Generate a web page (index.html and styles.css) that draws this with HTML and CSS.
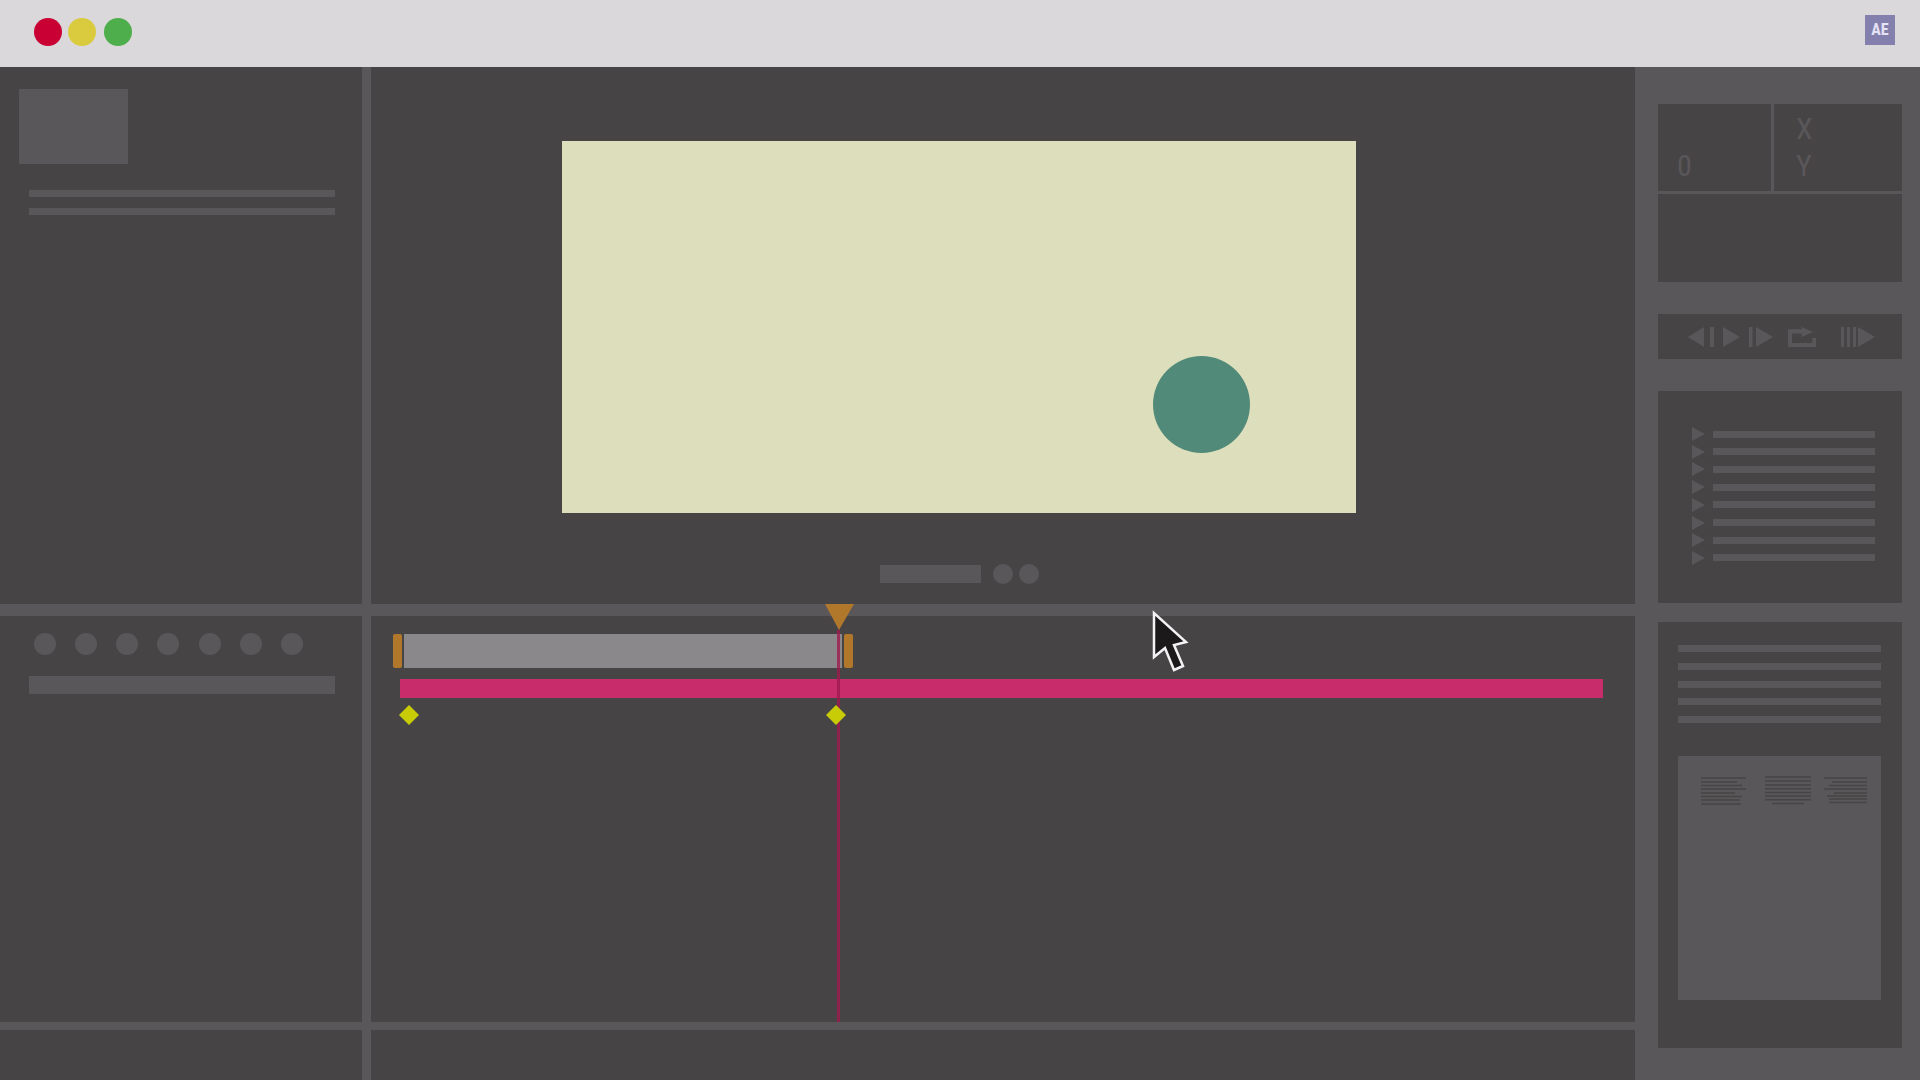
FILE: index.html
```
<!DOCTYPE html>
<html lang="en">
<head>
    <meta charset="UTF-8">
    <meta name="viewport" content="width=device-width, initial-scale=1.0">
    <title>AE</title>
    <link rel="stylesheet" href="styles.css">
</head>
<body>
    <header class="titlebar">
        <div class="window-buttons">
            <button class="dot close" aria-label="Close"></button>
            <button class="dot minimize" aria-label="Minimize"></button>
            <button class="dot maximize" aria-label="Maximize"></button>
        </div>
        <div class="app-badge">AE</div>
    </header>

    <div class="workspace">
        <main class="panels">
            <section class="panel project">
                <div class="thumb"></div>
                <div class="lines project-lines"><i></i><i></i></div>
            </section>

            <section class="panel preview">
                <div class="stage"><div class="ball"></div></div>
                <div class="preview-controls">
                    <div class="preview-bar"></div>
                    <button class="round" aria-label="Snapshot"></button>
                    <button class="round" aria-label="Channels"></button>
                </div>
            </section>

            <section class="panel layers">
                <div class="switches">
                    <button aria-label="Switch 1"></button>
                    <button aria-label="Switch 2"></button>
                    <button aria-label="Switch 3"></button>
                    <button aria-label="Switch 4"></button>
                    <button aria-label="Switch 5"></button>
                    <button aria-label="Switch 6"></button>
                    <button aria-label="Switch 7"></button>
                </div>
                <div class="layer-bar"></div>
            </section>

            <section class="panel timeline">
                <div class="work-area">
                    <span class="handle"></span>
                    <span class="range"></span>
                    <span class="handle"></span>
                </div>
                <div class="clip"></div>
                <svg class="key key-start" viewBox="0 0 20 20"><path d="M10 0L20 10L10 20L0 10Z"/></svg>
                <svg class="key key-end" viewBox="0 0 20 20"><path d="M10 0L20 10L10 20L0 10Z"/></svg>
                <div class="playhead">
                    <svg viewBox="0 0 30 26"><path d="M1 0H30L15 26Z"/></svg>
                    <span></span>
                </div>
                <svg class="cursor" viewBox="0 0 38 64">
                    <path d="M2 3V47L13 38L22 60L31 56L22 35L34 32Z"/>
                </svg>
            </section>

            <section class="panel"></section>
            <section class="panel"></section>
        </main>

        <aside class="sidebar">
            <section class="info">
                <div class="cell cell-zero"><span>0</span></div>
                <div class="cell cell-xy"><span>X</span><span>Y</span></div>
                <div class="cell cell-wide"></div>
            </section>

            <section class="transport">
                <button aria-label="Previous frame">
                    <svg width="26" height="20" viewBox="0 0 26 20"><path d="M0 10L16 0V20ZM22 0H26V20H22Z"/></svg>
                </button>
                <button aria-label="Play">
                    <svg width="17" height="20" viewBox="0 0 17 20"><path d="M0 0L17 10L0 20Z"/></svg>
                </button>
                <button aria-label="Next frame">
                    <svg width="24" height="20" viewBox="0 0 24 20"><path d="M0 0H3.5V20H0ZM7 0L24 10L7 20Z"/></svg>
                </button>
                <button class="loop" aria-label="Loop">
                    <svg width="28" height="20" viewBox="0 0 28 20"><path d="M0 2.3H13.7V0L25 5L13.7 10V6.5H4V16H24.3V11H28V20H0Z"/></svg>
                </button>
                <button class="ram" aria-label="RAM preview">
                    <svg width="34" height="20" viewBox="0 0 34 20"><path d="M0 0H3V20H0ZM6 0H9V20H6ZM12 0H15V20H12ZM17 0L34 10L17 20Z"/></svg>
                </button>
            </section>

            <section class="effects">
                <ul>
                    <li></li><li></li><li></li><li></li>
                    <li></li><li></li><li></li><li></li>
                </ul>
            </section>

            <section class="paragraph">
                <div class="lines paragraph-lines"><i></i><i></i><i></i><i></i><i></i></div>
                <div class="align-box">
                    <svg viewBox="0 0 166 30">
                        <!-- left -->
                        <path d="M0 2H45M0 6H36M0 9.5H41M0 13H45M0 17H34M0 20.5H41M0 24H39M0 28H40"/>
                        <!-- justify -->
                        <path d="M64 1H110M64 5H110M64 9H110M64 12.7H110M64 16.5H110M64 20H110M64 23.7H110M71 27.5H103"/>
                        <!-- right -->
                        <path d="M123 2H166M131 6H166M128 9.5H166M123 13H166M133 17H166M126 20H166M128 23H166M128 26.5H166"/>
                    </svg>
                </div>
            </section>
        </aside>
    </div>
</body>
</html>
```
FILE: styles.css
```
* {
    box-sizing: border-box;
}
body {
    margin: 0;
    min-height: 100vh;
    display: flex;
    flex-direction: column;
    background-color: #5a575a;
    font-family: "Roboto Condensed", "Open Sans Condensed", "DejaVu Sans Condensed", Roboto, sans-serif;
}
button {
    padding: 0;
    border: none;
    background: none;
    cursor: pointer;
}
svg {
    display: block;
}

/* title bar */
.titlebar {
    height: 67px;
    padding: 0 25px 0 34px;
    display: flex;
    justify-content: space-between;
    background-color: #dad8da;
}
.window-buttons {
    display: flex;
    gap: 6px;
    padding-top: 18px;
}
.dot {
    width: 28px;
    height: 28px;
    border-radius: 50%;
}
.close {
    background-color: #c90034;
}
.minimize {
    background-color: #dacb3e;
}
.maximize {
    margin-left: 2px;
    background-color: #4eae4b;
}
.app-badge {
    width: 30px;
    height: 30px;
    margin-top: 15px;
    background-color: #8480ad;
    color: #e4e2f4;
    font-size: 16px;
    font-weight: bold;
    line-height: 30px;
    text-align: center;
}

/* main panels */
.workspace {
    flex: 1;
    display: flex;
}
.panels {
    flex: 1;
    display: grid;
    grid-template-columns: 362px 1fr;
    grid-template-rows: auto 1fr 50px;
    gap: 8px 9px;
}
.panel {
    background-color: #474446;
}
.project,
.preview {
    margin-bottom: 4px;
}
.lines {
    display: flex;
    flex-direction: column;
    justify-content: space-between;
}
.lines i {
    height: 7px;
    background-color: #5a575a;
}
.project {
    padding: 22px 27px 0 19px;
}
.thumb {
    width: 109px;
    height: 75px;
    background-color: #5a575a;
}
.project-lines {
    height: 25px;
    margin: 26px 0 0 10px;
}
.preview {
    padding: 74px 88px 20px 0;
    display: flex;
    flex-direction: column;
    align-items: center;
}
.stage {
    position: relative;
    width: 67.5%;
    aspect-ratio: 794 / 372;
    background-color: #dddfbc;
}
.ball {
    position: absolute;
    left: 74.4%;
    top: 57.8%;
    width: 97px;
    height: 97px;
    border-radius: 50%;
    background-color: #528a7a;
}
.preview-controls {
    display: flex;
    align-items: center;
    gap: 6px;
    margin-top: 51px;
    height: 20px;
}
.preview-bar {
    width: 101px;
    height: 18px;
    margin-right: 6px;
    background-color: #5a575a;
}
.round {
    width: 20px;
    height: 20px;
    border-radius: 50%;
    background-color: #5a575a;
}
.layers {
    padding: 17px 27px 0 29px;
}
.switches {
    display: flex;
    justify-content: space-between;
    padding: 0 32px 0 5px;
}
.switches button {
    width: 22px;
    height: 22px;
    border-radius: 50%;
    background-color: #5a575a;
}
.layer-bar {
    height: 18px;
    margin-top: 21px;
    background-color: #5a575a;
}

/* timeline */
.timeline {
    position: relative;
    padding: 18px 32px 0 22px;
}
.work-area {
    display: flex;
    gap: 2px;
    width: 38%;
    height: 34px;
}
.handle {
    width: 9px;
    border-radius: 2px;
    background-color: #b1782c;
}
.range {
    flex: 1;
    background-color: #8a888a;
}
.clip {
    height: 19px;
    margin: 11px 0 0 7px;
    background-color: #c92c6a;
}
.key {
    position: absolute;
    top: 89px;
    z-index: 2;
    width: 20px;
    height: 20px;
    fill: #c8cc06;
}
.key-start {
    left: 2.2%;
}
.key-end {
    left: 36%;
}
.playhead {
    position: absolute;
    left: 37%;
    top: -12px;
    bottom: 0;
    z-index: 1;
    width: 30px;
    margin-left: -15px;
    display: flex;
    flex-direction: column;
    align-items: center;
}
.playhead svg {
    width: 30px;
    height: 26px;
    fill: #b1782c;
}
.playhead span {
    flex: 1;
    width: 3px;
    background-color: rgba(160, 26, 78, 0.8);
}
.cursor {
    position: absolute;
    left: 61.8%;
    top: -6px;
    width: 38px;
    height: 64px;
    fill: #1c191b;
    stroke: #f4f2f4;
    stroke-width: 2.5;
}

/* sidebar */
.sidebar {
    width: 285px;
    padding: 37px 18px 32px 23px;
    display: flex;
    flex-direction: column;
}
.info {
    display: grid;
    grid-template-columns: 113px 1fr;
    grid-template-rows: 87px 88px;
    gap: 3px;
    color: #5a575a;
    font-size: 30px;
    line-height: 37px;
}
.cell,
.transport,
.effects,
.paragraph {
    background-color: #474446;
}
.cell {
    display: flex;
    flex-direction: column;
    justify-content: flex-end;
    padding-bottom: 7px;
}
.cell-zero {
    padding-left: 19px;
}
.cell-xy {
    padding-left: 22px;
}
.cell-wide {
    grid-column: span 2;
}
.transport {
    height: 45px;
    margin-top: 32px;
    padding-left: 30px;
    display: flex;
    align-items: center;
    gap: 9px;
}
.transport svg {
    fill: #5a575a;
}
.loop {
    margin-left: 6px;
}
.ram {
    margin-left: 16px;
}
.effects {
    margin-top: 32px;
    padding: 36px 27px 38px 34px;
}
.effects ul {
    height: 138px;
    margin: 0;
    padding: 0;
    list-style: none;
    display: flex;
    flex-direction: column;
    justify-content: space-between;
}
.effects li {
    display: flex;
    align-items: center;
    gap: 8px;
}
.effects li::before {
    content: "";
    border-left: 13px solid #5a575a;
    border-top: 7px solid transparent;
    border-bottom: 7px solid transparent;
}
.effects li::after {
    content: "";
    flex: 1;
    height: 7px;
    background-color: #5a575a;
}
.paragraph {
    flex: 1;
    margin-top: 19px;
    padding: 23px 21px 48px 20px;
    display: flex;
    flex-direction: column;
    gap: 33px;
}
.paragraph-lines {
    height: 78px;
}
.align-box {
    flex: 1;
    padding: 20px 14px 0 23px;
    background-color: #5a575a;
}
.align-box svg {
    width: 100%;
    fill: none;
    stroke: #474446;
    stroke-width: 1.5;
}
```
